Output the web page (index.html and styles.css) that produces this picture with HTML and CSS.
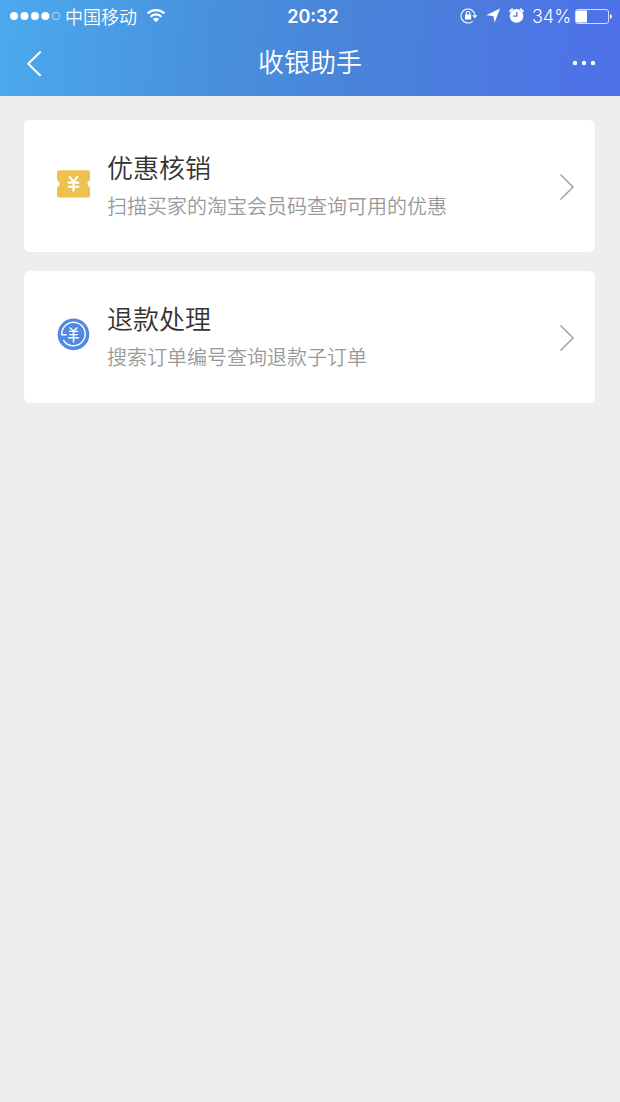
FILE: index.html
```html
<!DOCTYPE html>
<html lang="zh-CN">
<head>
<meta charset="utf-8">
<title>收银助手</title>
<meta name="viewport" content="width=device-width, initial-scale=1.0">
<link rel="stylesheet" href="styles.css">
</head>
<body>

<header class="header">
	<div class="status">
		<div class="status-left">
			<svg class="signal" width="50" height="10" viewBox="0 0 50 10" fill="#fff">
				<circle cx="4" cy="4" r="4"/>
				<circle cx="14.5" cy="4" r="4"/>
				<circle cx="25" cy="4" r="4"/>
				<circle cx="35.3" cy="4" r="4"/>
				<circle cx="46" cy="4" r="3.7" fill="none" stroke="#fff" stroke-width=".6"/>
			</svg>
			<span class="carrier">中国移动</span>
			<svg class="wifi" width="18" height="18" viewBox="0 0 18 18" fill="none" stroke="#fff" stroke-width="2.3">
				<path d="M.7 5.4C5.3.9 12.7.9 17.3 5.4"/>
				<path d="M3.6 8.7C6.6 5.6 11.4 5.6 14.4 8.7"/>
				<path d="M9 14.2 5.9 11.1C7.6 9.4 10.4 9.4 12.1 11.1Z" fill="#fff" stroke="none"/>
			</svg>
		</div>
		<div class="clock">20:32</div>
		<div class="status-right">
			<svg width="18" height="18" viewBox="0 0 18 18" fill="none" stroke="#fff" stroke-width="1.1">
				<path d="M12.6 13.3A7 7 0 1 1 15 7.4"/>
				<path d="M12.2 7.2H17.4L14.8 10.2Z" fill="#fff" stroke="none"/>
				<rect x="5" y="6.6" width="6.2" height="5" rx=".6" fill="#fff" stroke="none"/>
				<path d="M6.2 7V5.4a1.9 1.9 0 0 1 3.8 0V7"/>
			</svg>
			<svg width="14" height="18" viewBox="0 0 14 18" fill="#fff">
				<path d="M14 .6 8.6 14.4 7.4 8 .2 7.2Z"/>
			</svg>
			<svg width="16" height="18" viewBox="0 0 16 18" fill="#fff">
				<circle cx="8.5" cy="7.9" r="6.8"/>
				<path d="M1.5 3.7 4.7.7M15.5 3.7 12.3.7" stroke="#fff" stroke-width="1.8"/>
				<path d="M8.8 3.9V8.2H5.2" fill="none" stroke="#4d78e0" stroke-width="1.3"/>
			</svg>
			<span class="percent">34%</span>
			<svg class="battery" width="37" height="17" viewBox="0 0 37 17">
				<rect x=".5" y=".5" width="33" height="14" rx="2.5" fill="none" stroke="#fff" stroke-opacity=".75"/>
				<path d="M2 1.5H12V13.5H2a1 1 0 0 1-1-1V2.5a1 1 0 0 1 1-1Z" fill="#fff"/>
				<path d="M35 5a2.6 2.6 0 0 1 0 5Z" fill="#fff"/>
			</svg>
		</div>
	</div>
	<nav class="nav">
		<button class="nav-btn back" type="button" aria-label="返回">
			<svg width="16" height="26" viewBox="0 0 16 26" fill="none" stroke="#fff" stroke-width="2" stroke-linecap="round" stroke-linejoin="round">
				<path d="M14 1.2 2.2 12.7 14 24.2"/>
			</svg>
		</button>
		<h1 class="nav-title">收银助手</h1>
		<button class="nav-btn more" type="button" aria-label="更多">
			<svg width="24" height="8" viewBox="0 0 24 8" fill="#fff">
				<circle cx="3" cy="3" r="2.2"/>
				<circle cx="12" cy="3" r="2.2"/>
				<circle cx="21" cy="3" r="2.2"/>
			</svg>
		</button>
	</nav>
</header>

<main class="list">
	<a class="card" href="#coupon">
		<svg class="card-icon" width="34" height="34" viewBox="0 0 34 34">
			<path d="M3 3.3H32a2 2 0 0 1 2 2V13.2a3.8 3.8 0 0 0 0 7.2V28.6a2 2 0 0 1-2 2H3a2 2 0 0 1-2-2V20.4a3.8 3.8 0 0 0 0-7.2V5.3a2 2 0 0 1 2-2Z" fill="#edc150"/>
			<path d="M13.2 9.4 17.5 14.6 21.8 9.4M11.8 15.6H23.2M11.8 19.8H23.2M17.5 14.5V24.4" fill="none" stroke="#fff" stroke-width="2.1"/>
		</svg>
		<div class="card-text">
			<h2 class="card-title">优惠核销</h2>
			<p class="card-desc">扫描买家的淘宝会员码查询可用的优惠</p>
		</div>
		<svg class="arrow" width="16" height="28" viewBox="0 0 16 28" fill="none" stroke="#999" stroke-width="1.4">
			<path d="M1.5 1.5 14 14 1.5 26.5"/>
		</svg>
	</a>
	<a class="card" href="#refund">
		<svg class="card-icon" width="34" height="34" viewBox="0 0 34 34">
			<circle cx="17.5" cy="16.4" r="15.8" fill="#5089e0"/>
			<g fill="none" stroke="#fff" stroke-width="1.4">
				<path d="M10.8 16.8H5.8A11.7 11.7 0 1 1 7.3 21.8"/>
				<path d="M13.6 9.4 17.5 13 21.4 9.4M12.8 13.4H22.2M13.2 16.6H21.8M12 19.8H23M17.5 13V24.6"/>
			</g>
		</svg>
		<div class="card-text">
			<h2 class="card-title">退款处理</h2>
			<p class="card-desc">搜索订单编号查询退款子订单</p>
		</div>
		<svg class="arrow" width="16" height="28" viewBox="0 0 16 28" fill="none" stroke="#999" stroke-width="1.4">
			<path d="M1.5 1.5 14 14 1.5 26.5"/>
		</svg>
	</a>
</main>

</body>
</html>
```
FILE: styles.css
```css
* {
	box-sizing: border-box;
}
body {
	margin: 0;
	background: #eee;
	color: #333;
	font-family: Inter, "Noto Sans CJK SC", sans-serif;
}
svg {
	display: block;
	flex: none;
}
.header {
	color: #fff;
	background: linear-gradient(95deg, #4caaef 0%, #4891de 33%, #4985d9 55%, #4c7ae0 78%, #4e70e9 100%);
}

/* status bar */
.status {
	display: grid;
	grid-template-columns: 1fr auto 1fr;
	align-items: center;
	height: 32px;
	padding: 0 8px 0 10px;
	font-size: 18px;
	line-height: 32px;
}
.status-left,
.status-right {
	display: flex;
	align-items: center;
}
.status-right {
	justify-content: flex-end;
	gap: 8px;
}
.carrier {
	margin: 0 10px 0 5px;
	padding-top: 2px;
	font-weight: 350;
}
.clock {
	padding-left: 4px;
	font-weight: 600;
}
.percent {
	font-weight: 350;
}
.battery {
	margin-left: -4px;
}

/* title bar */
.nav {
	display: grid;
	grid-template-columns: 1fr auto 1fr;
	align-items: center;
	height: 64px;
	padding: 0 24px 2px;
}
.nav-btn {
	padding: 0;
	border: 0;
	background: none;
	cursor: pointer;
}
.back {
	justify-self: start;
	padding: 2px 0 0 2px;
}
.more {
	justify-self: end;
	padding-top: 2px;
}
.nav-title {
	margin: 0;
	font-size: 26px;
	font-weight: 350;
	line-height: 40px;
}

/* cards */
.list {
	display: flex;
	flex-direction: column;
	gap: 19px;
	padding: 24px 25px 24px 24px;
}
.card {
	display: flex;
	align-items: center;
	padding: 29px 20px 27px 32px;
	border-radius: 6px;
	background: #fff;
	color: inherit;
	text-decoration: none;
}
.card-icon {
	margin: 0 17px 6px 0;
}
.card-text {
	flex: 1;
}
.card-title {
	margin: 0;
	font-size: 26px;
	font-weight: 350;
	line-height: 40px;
}
.card-desc {
	margin: 0;
	color: #999;
	font-size: 20px;
	font-weight: 350;
	line-height: 36px;
}
```
